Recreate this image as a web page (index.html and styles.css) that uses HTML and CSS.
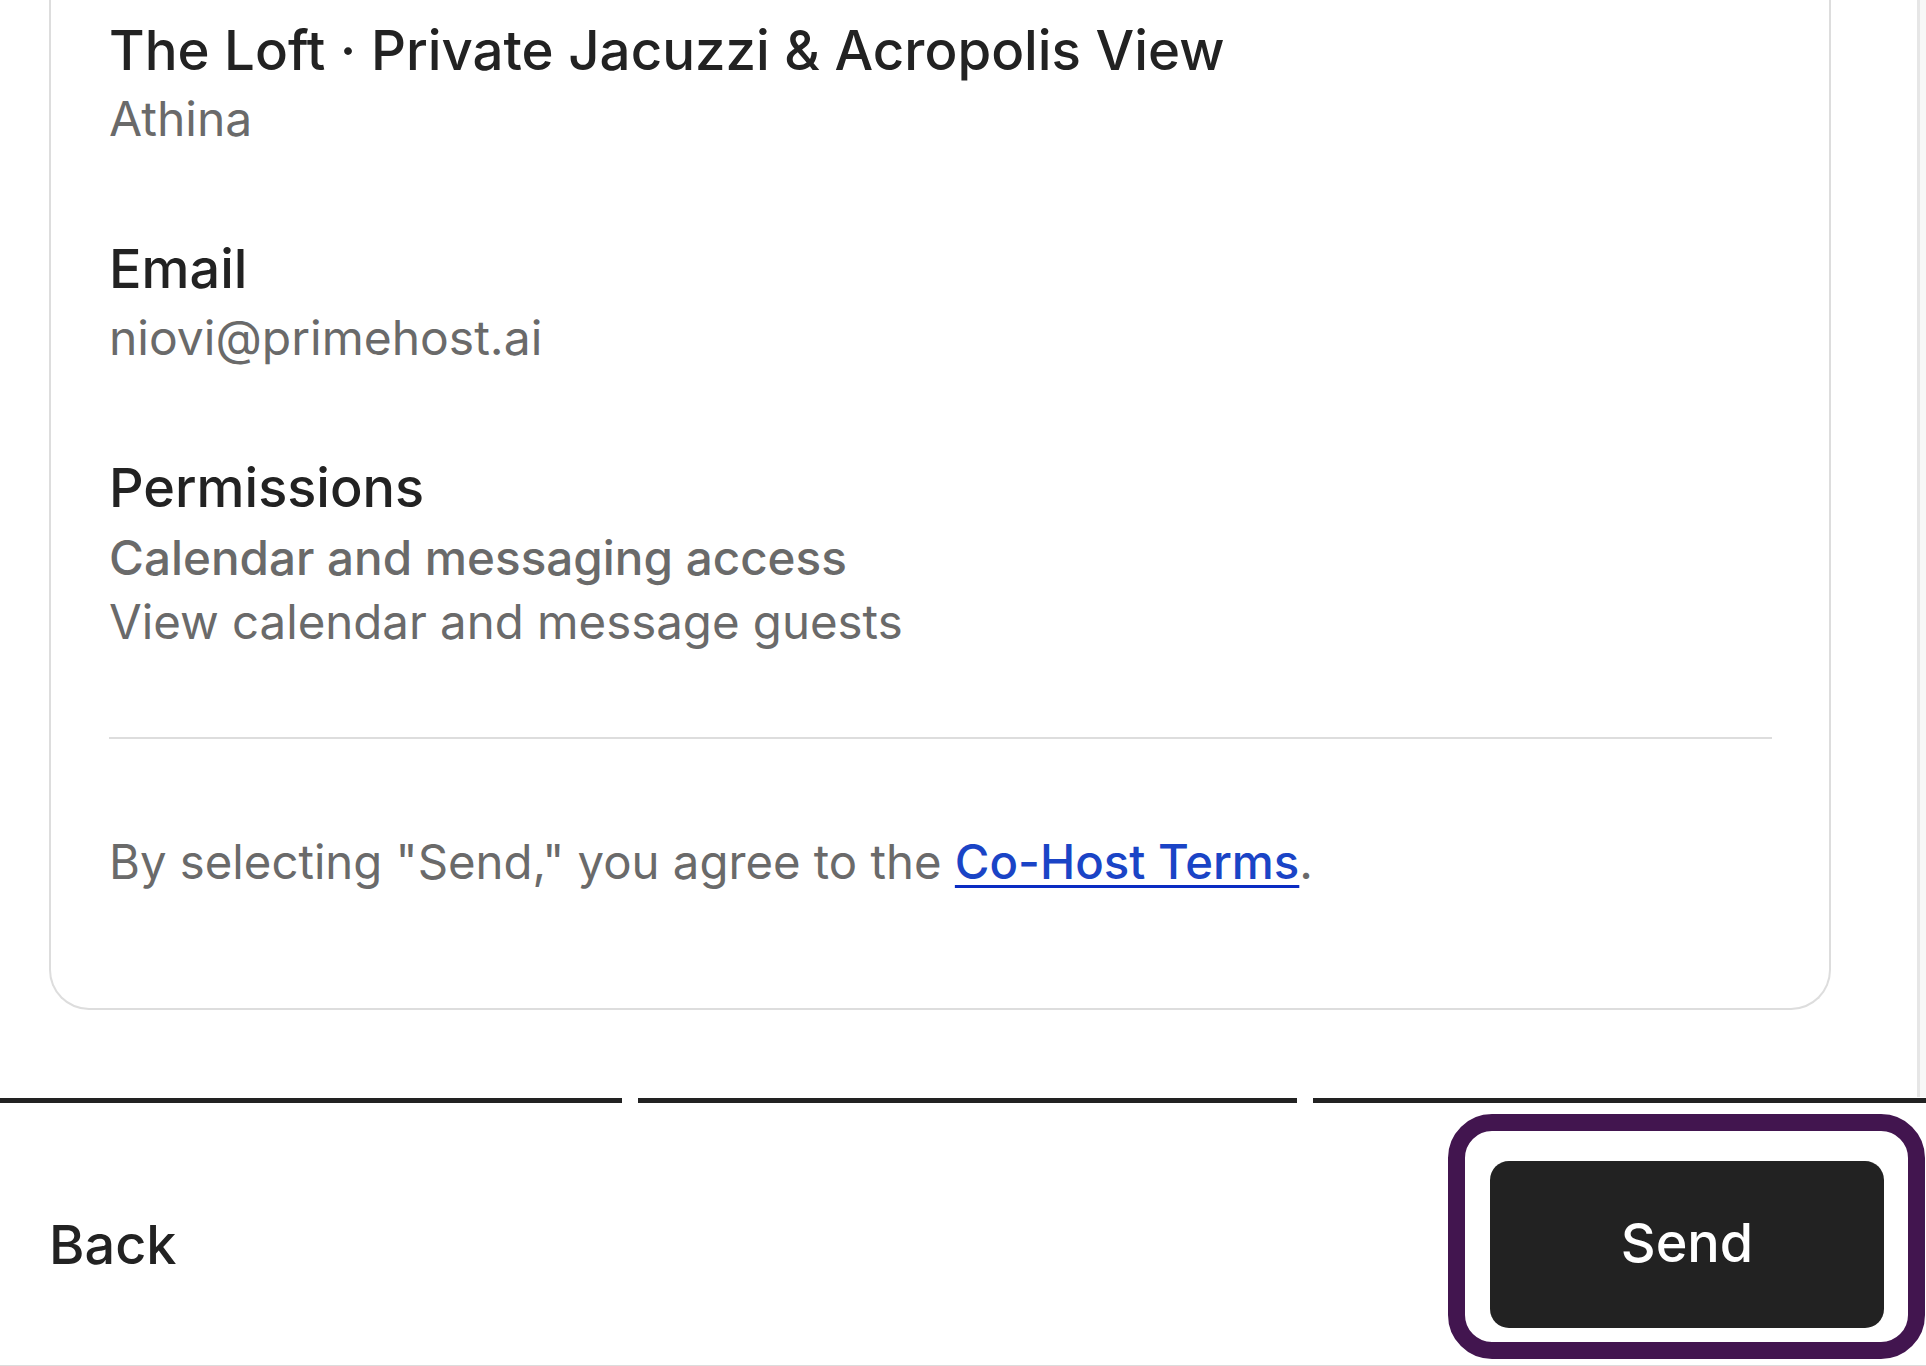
FILE: index.html
```html
<!DOCTYPE html>
<html lang="en">
<head>
<meta charset="utf-8">
<title>Invite co-host</title>
<link rel="stylesheet" href="styles.css">
</head>
<body>
<div class="page">
  <div class="scroll">
    <main class="content">
      <section class="card">
        <div class="group">
          <h2 class="heading heading-title">The Loft · Private Jacuzzi &amp; Acropolis View</h2>
          <p class="sub">Athina</p>
        </div>
        <div class="group">
          <h2 class="heading">Email</h2>
          <p class="sub">niovi@primehost.ai</p>
        </div>
        <div class="group">
          <h2 class="heading">Permissions</h2>
          <p class="sub sub-strong">Calendar and messaging access</p>
          <p class="sub sub-tight">View calendar and message guests</p>
        </div>
        <hr class="divider">
        <p class="terms">By selecting "Send," you agree to the <a class="terms-link" href="#">Co-Host Terms</a>.</p>
      </section>
    </main>
    <div class="scrollbar"></div>
  </div>
  <footer class="footer">
    <div class="progress">
      <span class="progress-seg"></span>
      <span class="progress-seg"></span>
      <span class="progress-seg"></span>
    </div>
    <div class="actions">
      <button class="back" type="button">Back</button>
      <button class="send" type="button">Send</button>
    </div>
  </footer>
</div>
</body>
</html>
```
FILE: styles.css
```css
* { box-sizing: border-box; }
html, body {
  margin: 0;
  padding: 0;
  background: #ffffff;
  overflow: hidden;
}
body {
  font-family: "Inter", "Noto Sans", "Liberation Sans", sans-serif;
  color: #222222;
}
.page {
  width: 1926px;
  height: 1366px;
  display: flex;
  flex-direction: column;
}
.scroll {
  height: 1097px;
  display: flex;
  flex-direction: row;
}
.content {
  flex: 1;
  padding: 0 86px 0 49px;
}
.scrollbar {
  width: 9px;
  background: #f7f7f7;
  border-left: 3px solid #e6e6e6;
}
.card {
  border: 2px solid #dddddd;
  border-top: 0;
  border-radius: 0 0 40px 40px;
  padding: 18px 57px 114px 58px;
}
.group + .group {
  margin-top: 86px;
}
.heading {
  margin: 0;
  font-size: 54px;
  line-height: 64px;
  font-weight: 500;
  color: #222222;
}
.heading-title {
  font-size: 54.6px;
}
.sub {
  margin: 5px 0 0;
  font-size: 48px;
  line-height: 64px;
  font-weight: 400;
  color: #6a6a6a;
}
.sub-strong {
  font-weight: 500;
  font-size: 47.6px;
  margin-top: 6px;
}
.sub-tight {
  margin-top: 0;
  font-size: 47.4px;
}
.divider {
  margin: 83px 0 0 0;
  border: 0;
  height: 2px;
  background: #dddddd;
}
.terms {
  margin: 91px 0 0 0;
  font-size: 47.3px;
  line-height: 64px;
  color: #6a6a6a;
}
.terms-link {
  color: #1a44c6;
  font-weight: 500;
  text-decoration: underline;
  text-decoration-thickness: 3px;
  text-underline-offset: 6px;
  text-decoration-color: #0b2cc2;
}
.footer {
  height: 269px;
  display: flex;
  flex-direction: column;
  border-bottom: 1px solid #dcdcdc;
}
.progress {
  display: grid;
  grid-template-columns: 622px 659px 1fr;
  column-gap: 16px;
  padding-top: 1px;
}
.progress-seg {
  height: 5px;
  background: #222222;
}
.actions {
  flex: 1;
  display: flex;
  flex-direction: row;
  justify-content: space-between;
  align-items: flex-start;
  padding: 58px 42px 0 49px;
}
.back {
  margin: 0;
  padding: 0;
  border: 0;
  background: none;
  font-family: inherit;
  font-size: 54px;
  line-height: 64px;
  font-weight: 500;
  color: #222222;
  height: 167px;
}
.send {
  position: relative;
  margin: 0;
  width: 394px;
  height: 167px;
  border: 0;
  border-radius: 19px;
  background: #222222;
  color: #ffffff;
  font-family: inherit;
  font-size: 54px;
  line-height: 64px;
  font-weight: 500;
  padding: 0 0 4px;
}
.send::after {
  content: "";
  position: absolute;
  top: -47px;
  right: -41px;
  bottom: -31px;
  left: -42px;
  border: 17px solid #42154f;
  border-radius: 44px;
  pointer-events: none;
}
```
